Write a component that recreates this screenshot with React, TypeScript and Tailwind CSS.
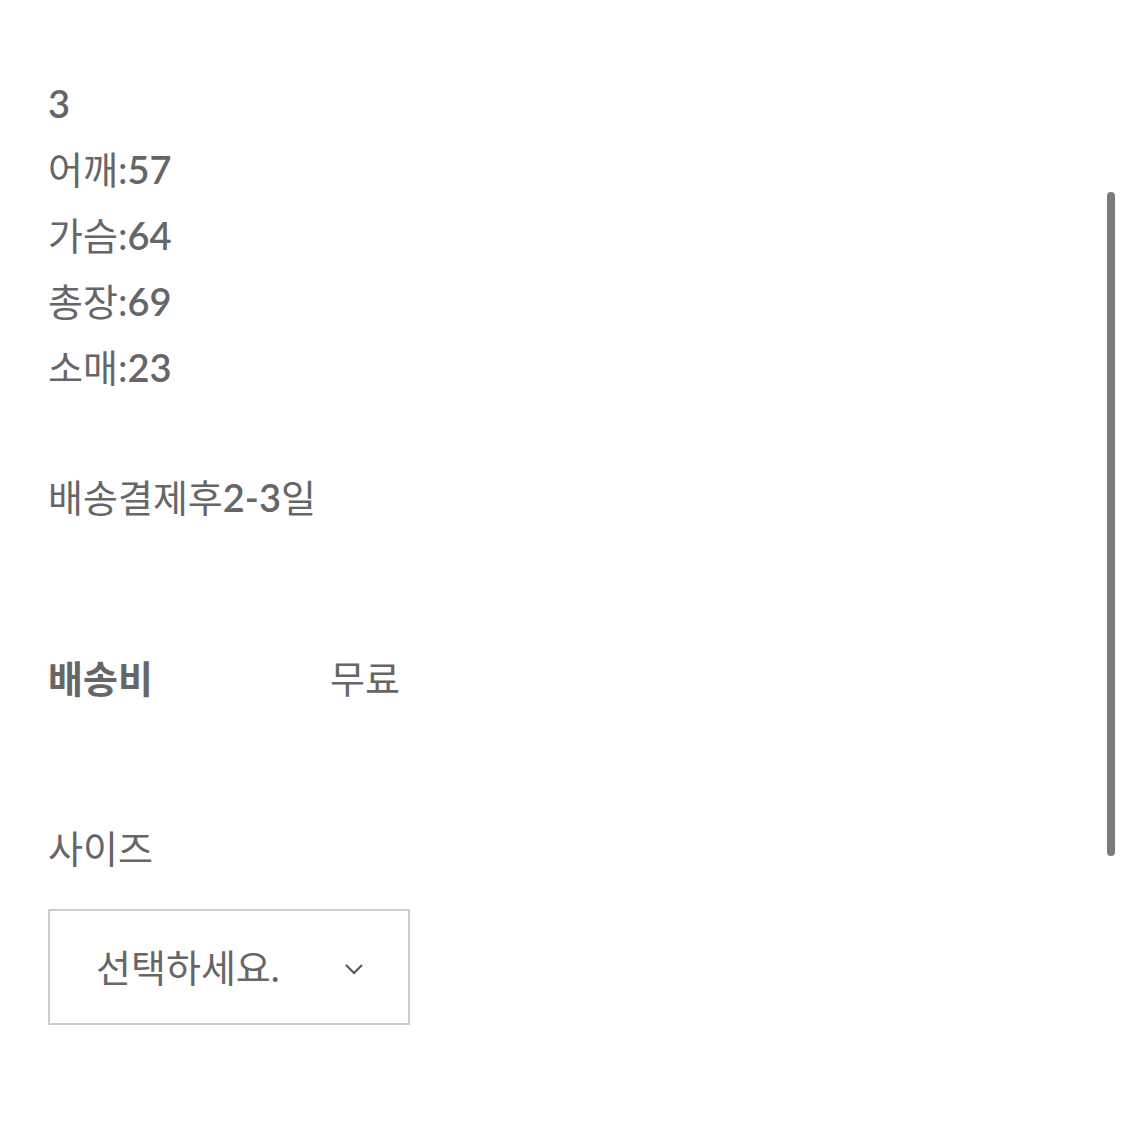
const font = "font-['Lato','Noto_Sans_CJK_KR',sans-serif]";

const sizes = [
  { label: "", value: "3" },
  { label: "어깨:", value: "57" },
  { label: "가슴:", value: "64" },
  { label: "총장:", value: "69" },
  { label: "소매:", value: "23" },
];

export default function App() {
  return (
    <div className={`relative w-[1125px] h-[1125px] bg-white text-[#666666] ${font}`}>
      <div className="pl-12 pt-[70px] text-[38px] leading-[66px]">
        {/* product measurements */}
        {sizes.map((s) => (
          <div key={s.value}>
            {s.label}
            <span className="font-semibold">{s.value}</span>
          </div>
        ))}

        <div className="mt-16">
          배송결제후<span className="font-semibold">2-3</span>일
        </div>

        <div className="mt-[115px] grid grid-cols-[282px_auto]">
          <div className="font-bold">배송비</div>
          <div>무료</div>
        </div>

        <div className="mt-[104px]">사이즈</div>

        {/* option select */}
        <div className="mt-7 w-[362px] h-[116px] border-2 border-[#cccccc] flex items-center pl-[46px] pr-[44px] justify-between">
          <span>선택하세요.</span>
          <svg width="20" height="12" viewBox="0 0 20 12" fill="none" className="mt-1">
            <path d="M2 2l8 8 8-8" stroke="#555" strokeWidth="2" />
          </svg>
        </div>
      </div>

      {/* scroll indicator */}
      <div className="absolute left-[1107px] top-[192px] w-2 h-[664px] rounded-full bg-[#7a7a7a]" />
    </div>
  );
}
